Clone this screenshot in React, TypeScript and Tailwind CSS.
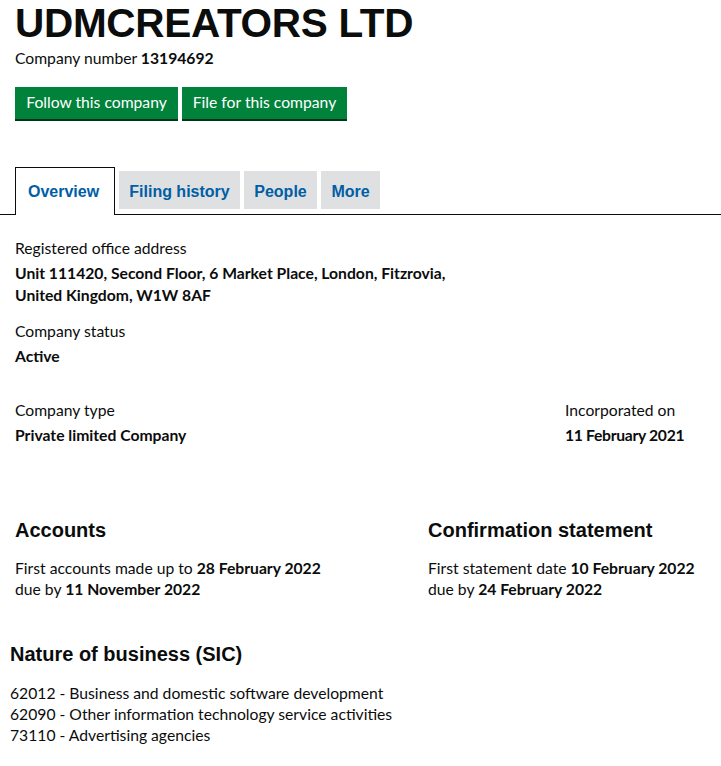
import React from "react";

const body = { fontFamily: "Lato, 'Noto Sans', sans-serif" };
const arial = { fontFamily: "'Liberation Sans', Arial, sans-serif" };

export default function App() {
  return (
    <div className="bg-white text-[#0b0c0c] w-[721px] h-[766px] overflow-hidden" style={body}>
      <div className="pl-[15px]">
        <h1 className="text-[40.5px] leading-[42px] font-bold pt-[2px] tracking-[-0.3px]" style={arial}>
          UDMCREATORS LTD
        </h1>
        <p className="text-[15.7px] leading-[20px] mt-[4px]">
          Company number <strong className="font-bold">13194692</strong>
        </p>
        <div className="flex gap-[4px] mt-[19px]">
          <button className="bg-[#00823b] text-white text-[15.7px] h-[32px] w-[163px] shadow-[0_2px_0_#003618]">
            Follow this company
          </button>
          <button className="bg-[#00823b] text-white text-[15.7px] h-[32px] w-[165px] shadow-[0_2px_0_#003618]">
            File for this company
          </button>
        </div>
      </div>

      <div className="mt-[48px] pl-[15px] flex items-end border-b border-[#0b0c0c] font-bold text-[16px]" style={arial}>
        <div className="h-[48px] w-[100px] border border-b-0 border-[#0b0c0c] bg-white text-[#005ea5] flex items-center pl-[12px] -mb-px relative pt-[1px]">
          Overview
        </div>
        <div className="flex items-start self-start mt-[4px] ml-[4px] gap-[4px]">
          <div className="h-[38px] w-[121px] bg-[#dee0e2] text-[#005ea5] flex items-center justify-center pt-[3px]">Filing history</div>
          <div className="h-[38px] w-[73px] bg-[#dee0e2] text-[#005ea5] flex items-center justify-center pt-[3px]">People</div>
          <div className="h-[38px] w-[59px] bg-[#dee0e2] text-[#005ea5] flex items-center justify-center pt-[3px]">More</div>
        </div>
      </div>

      <div className="pl-[15px] text-[15.7px] leading-[21px]">
        <div className="mt-[23px]">Registered office address</div>
        <div className="mt-[3px] font-bold leading-[22px]">
          Unit 111420, Second Floor, 6 Market Place, London, Fitzrovia,
          <br />
          United Kingdom, W1W 8AF
        </div>
        <div className="mt-[15px]">Company status</div>
        <div className="mt-[4px] font-bold">Active</div>

        <div className="flex mt-[33px]">
          <div className="w-[550px]">
            <div>Company type</div>
            <div className="mt-[4px] font-bold">Private limited Company</div>
          </div>
          <div>
            <div>Incorporated on</div>
            <div className="mt-[4px] font-bold tracking-[-0.3px]">11 February 2021</div>
          </div>
        </div>

        <div className="flex mt-[72px]">
          <div className="w-[413px]">
            <h2 className="text-[20px] leading-[24px] font-bold" style={arial}>Accounts</h2>
            <div className="mt-[16px]">
              First accounts made up to <strong>28 February 2022</strong>
            </div>
            <div>
              due by <strong>11 November 2022</strong>
            </div>
          </div>
          <div>
            <h2 className="text-[20px] leading-[24px] font-bold" style={arial}>Confirmation statement</h2>
            <div className="mt-[16px]">
              First statement date <strong>10 February 2022</strong>
            </div>
            <div>
              due by <strong>24 February 2022</strong>
            </div>
          </div>
        </div>
      </div>

      <div className="pl-[10px] text-[15.7px] leading-[21px]">
        <h2 className="text-[20px] leading-[24px] font-bold mt-[42px]" style={arial}>Nature of business (SIC)</h2>
        <div className="mt-[17px]">62012 - Business and domestic software development</div>
        <div>62090 - Other information technology service activities</div>
        <div>73110 - Advertising agencies</div>
      </div>
    </div>
  );
}
